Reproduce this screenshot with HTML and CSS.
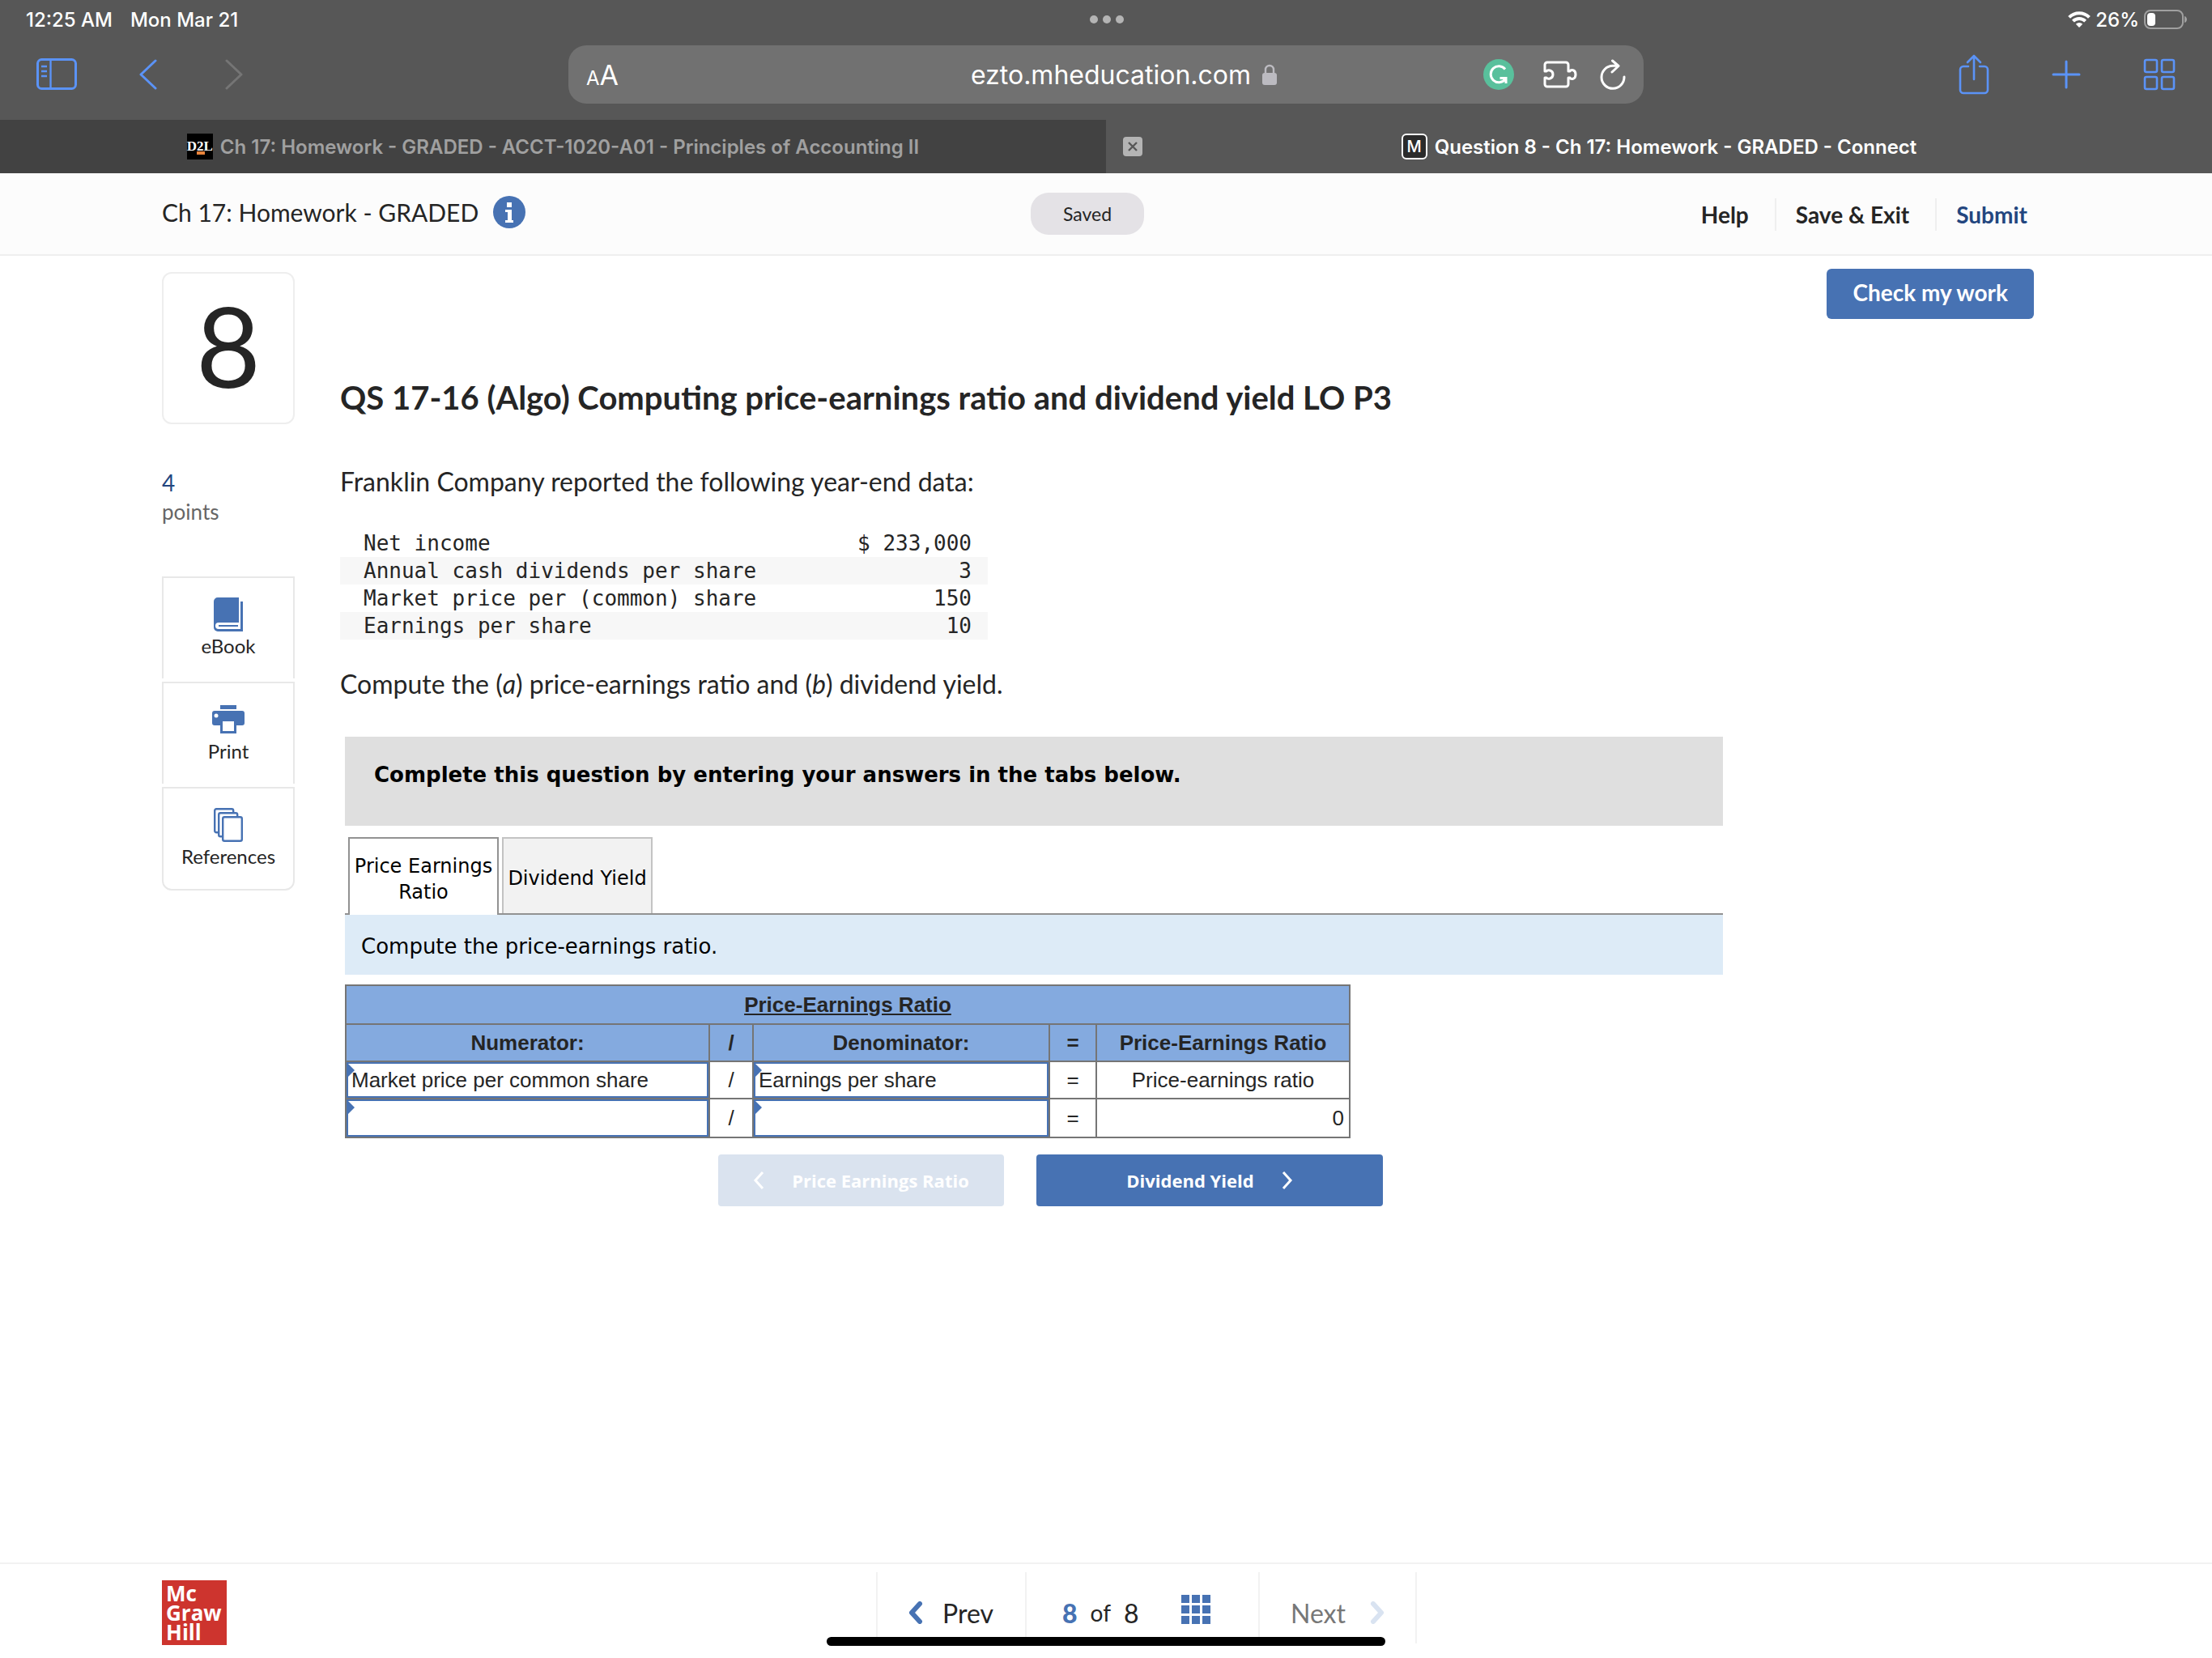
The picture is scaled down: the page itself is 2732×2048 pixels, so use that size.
FILE: index.html
```html
<!DOCTYPE html>
<html lang="en">
<head>
  <meta charset="UTF-8" />
  <meta name="viewport" content="width=device-width, initial-scale=1.0" />
  <title>Question 8 - Ch 17: Homework - GRADED - Connect</title>
  <link rel="stylesheet" href="styles.css">
</head>
<body>
  <header class="browser">
    <div class="status">
      <div class="status-left"><span>12:25 AM</span><span>Mon Mar 21</span></div>
      <div class="dots"><i></i><i></i><i></i></div>
      <div class="status-right">
        <svg width="28" height="20" viewBox="0 0 28 20" fill="none" stroke="#fff" stroke-width="4">
          <path d="M1.6 7.4a17.5 17.5 0 0 1 24.8 0M6.4 12.2a10.8 10.8 0 0 1 15.2 0" />
          <path d="M14 20l-4.2-4.3a6 6 0 0 1 8.4 0z" fill="#fff" stroke="none" />
        </svg>
        <span>26%</span>
        <svg width="54" height="24" viewBox="0 0 54 24">
          <rect x="1" y="1" width="47" height="22" rx="7" fill="none" stroke="#a0a0a0" stroke-width="2" />
          <rect x="4" y="4" width="10" height="16" rx="4" fill="#fff" />
          <path d="M50 8c4 1 4 7 0 8z" fill="#a0a0a0" />
        </svg>
      </div>
    </div>

    <div class="toolbar">
      <div class="tools-left">
        <button aria-label="Sidebar">
          <svg width="50" height="40" viewBox="0 0 50 40" fill="none" stroke="#5b93f7" stroke-width="3">
            <rect x="1.5" y="1.5" width="47" height="36" rx="5" />
            <path d="M17.5 2v35M6 10h7M6 16h7M6 22h7" stroke-width="2.4" />
          </svg>
        </button>
        <button aria-label="Back">
          <svg width="22" height="38" viewBox="0 0 22 38" fill="none" stroke="#5b93f7" stroke-width="3" stroke-linecap="round" stroke-linejoin="round"><path d="M20 2L2 19l18 17" /></svg>
        </button>
        <button aria-label="Forward" disabled>
          <svg width="22" height="38" viewBox="0 0 22 38" fill="none" stroke="#757575" stroke-width="3" stroke-linecap="round" stroke-linejoin="round"><path d="M2 2l18 17L2 36" /></svg>
        </button>
      </div>
      <div class="address">
        <button class="text-size" aria-label="Text size"><small>A</small>A</button>
        <div class="url">
          <span>ezto.mheducation.com</span>
          <svg width="18" height="26" viewBox="0 0 18 26">
            <path d="M4 12V7a5 5 0 0 1 10 0v5" fill="none" stroke="#bcbbc1" stroke-width="2.4" />
            <rect y="11" width="18" height="15" rx="3" fill="#bcbbc1" />
          </svg>
        </div>
        <div class="address-icons">
          <button class="grammar" aria-label="Grammarly">
            <svg width="38" height="38" viewBox="0 0 38 38" fill="none" stroke="#fff" stroke-width="3">
              <circle cx="19" cy="19" r="19" fill="#59c09c" stroke="none" />
              <path d="M27 12.5A10 10 0 1 0 27 25M20.5 23.5H28V30" />
            </svg>
          </button>
          <button aria-label="Extensions">
            <svg width="42" height="34" viewBox="0 0 42 34" fill="none" stroke="#fff" stroke-width="3" stroke-linejoin="round">
              <path d="M2 5a3 3 0 0 1 3-3h23a3 3 0 0 1 3 3v8h2c1-2 7-2.5 7 4s-6 6-7 4h-2v8a3 3 0 0 1-3 3H5a3 3 0 0 1-3-3v-8h2c1 2 8 2 8-4s-7-6-8-4H2z" />
            </svg>
          </button>
          <button aria-label="Reload">
            <svg width="32" height="38" viewBox="0 0 32 38" fill="none" stroke="#fff" stroke-width="3" stroke-linecap="round" stroke-linejoin="round">
              <path d="M22.5 8.3H16A14 14 0 1 0 30 22M15.5 2l7.5 6.5-8 7.500" />
            </svg>
          </button>
        </div>
      </div>
      <div class="tools-right">
        <button aria-label="Share">
          <svg width="38" height="50" viewBox="0 0 38 50" fill="none" stroke="#5b93f7" stroke-width="2.6" stroke-linecap="round" stroke-linejoin="round">
            <path d="M12 15H6a4 4 0 0 0-4 4v25a4 4 0 0 0 4 4h26a4 4 0 0 0 4-4V19a4 4 0 0 0-4-4h-6M19 31V2M11 10l8-8 8 8" />
          </svg>
        </button>
        <button aria-label="New tab">
          <svg width="36" height="36" viewBox="0 0 36 36" fill="none" stroke="#5b93f7" stroke-width="3" stroke-linecap="round"><path d="M18 2v32M2 18h32" /></svg>
        </button>
        <button aria-label="Tab overview">
          <svg width="40" height="40" viewBox="0 0 40 40" fill="none" stroke="#5b93f7" stroke-width="2.6">
            <rect x="2" y="2" width="15" height="15" rx="2" /><rect x="23" y="2" width="15" height="15" rx="2" />
            <rect x="2" y="23" width="15" height="15" rx="2" /><rect x="23" y="23" width="15" height="15" rx="2" />
          </svg>
        </button>
      </div>
    </div>

    <nav class="tabs">
      <a class="tab" href="#">
        <span class="fav fav-d2l">D2L</span>
        <span>Ch 17: Homework - GRADED - ACCT-1020-A01 - Principles of Accounting II</span>
      </a>
      <div class="tab active">
        <button class="tab-close" aria-label="Close tab">
          <svg width="24" height="24" viewBox="0 0 24 24"><rect width="24" height="24" rx="4" fill="#b4b4b4" /><path d="M7 7l10 10M17 7L7 17" stroke="#575757" stroke-width="2.4" /></svg>
        </button>
        <span class="fav fav-m">M</span>
        <span>Question 8 - Ch 17: Homework - GRADED - Connect</span>
      </div>
    </nav>
  </header>

  <header class="app-header">
    <div class="title">
      <span>Ch 17: Homework - GRADED</span>
      <button aria-label="Information">
        <svg width="40" height="40" viewBox="0 0 40 40"><circle cx="20" cy="20" r="20" fill="#4772b3" /><path d="M17 8h6v6h-6zM15 17h8v13h2v3H15v-3h3v-10h-3z" fill="#fff" /></svg>
      </button>
    </div>
    <span class="saved">Saved</span>
    <nav class="links">
      <a href="#">Help</a>
      <a href="#">Save &amp; Exit</a>
      <a href="#" class="submit">Submit</a>
    </nav>
  </header>

  <div class="page">
    <aside class="side">
      <div class="number">8</div>
      <div class="points"><b>4</b>points</div>
      <div class="side-tools">
        <button>
          <svg width="36" height="42" viewBox="0 0 36 42">
            <path d="M5 0h26v31H6a4 4 0 0 0 0 8h27V5h3v37H5a5 5 0 0 1-5-5V5a5 5 0 0 1 5-5z" fill="#4772b3" />
            <path d="M6 35h24" stroke="#4772b3" stroke-width="2" />
          </svg>
          <span>eBook</span>
        </button>
        <button>
          <svg width="40" height="42" viewBox="0 0 40 42" fill="#4772b3">
            <path d="M10 3h20v5H10zM3 10h34a3 3 0 0 1 3 3v12a3 3 0 0 1-3 3h-7v10H10V28H3a3 3 0 0 1-3-3V13a3 3 0 0 1 3-3z" />
            <path d="M13 23h14v12H13z" fill="#fff" /><circle cx="5" cy="16" r="2.5" fill="#fff" />
          </svg>
          <span>Print</span>
        </button>
        <button>
          <svg width="36" height="42" viewBox="0 0 36 42" fill="#fff" stroke="#4772b3" stroke-width="2.4">
            <rect x="1.2" y="1.2" width="23" height="29" rx="2" /><rect x="6.2" y="6.2" width="23" height="29" rx="2" /><rect x="11.2" y="11.2" width="23.6" height="29.6" rx="2" />
          </svg>
          <span>References</span>
        </button>
      </div>
    </aside>

    <main class="question">
      <button class="check">Check my work</button>
      <h1>QS 17-16 (Algo) Computing price-earnings ratio and dividend yield LO P3</h1>
      <p class="text">Franklin Company reported the following year-end data:</p>
      <table class="data">
        <tr><td>Net income</td><td>$ 233,000</td></tr>
        <tr><td>Annual cash dividends per share</td><td>3</td></tr>
        <tr><td>Market price per (common) share</td><td>150</td></tr>
        <tr><td>Earnings per share</td><td>10</td></tr>
      </table>
      <p class="text">Compute the (<i>a</i>) price-earnings ratio and (<i>b</i>) dividend yield.</p>

      <section class="worksheet">
        <div class="banner">Complete this question by entering your answers in the tabs below.</div>
        <div class="sheet-tabs">
          <button class="current">Price Earnings Ratio</button>
          <button>Dividend Yield</button>
        </div>
        <div class="instruction">Compute the price-earnings ratio.</div>
        <table class="answers">
          <colgroup><col class="numerator"><col class="slash"><col class="denominator"><col class="equals"><col></colgroup>
          <thead>
            <tr class="tall"><th colspan="5"><u>Price-Earnings Ratio</u></th></tr>
            <tr><th>Numerator:</th><th>/</th><th>Denominator:</th><th>=</th><th>Price-Earnings Ratio</th></tr>
          </thead>
          <tbody>
            <tr>
              <td class="entry"><input type="text" aria-label="Numerator name" value="Market price per common share"></td>
              <td>/</td>
              <td class="entry"><input type="text" aria-label="Denominator name" value="Earnings per share"></td>
              <td>=</td>
              <td>Price-earnings ratio</td>
            </tr>
            <tr class="tall">
              <td class="entry"><input type="text" aria-label="Numerator amount"></td>
              <td>/</td>
              <td class="entry"><input type="text" aria-label="Denominator amount"></td>
              <td>=</td>
              <td class="result">0</td>
            </tr>
          </tbody>
        </table>
        <div class="steps">
          <button class="step-prev" disabled>
            <svg width="14" height="22" viewBox="0 0 14 22" fill="none" stroke="#fff" stroke-width="3"><path d="M12 1L3 11l9 10" /></svg>
            <span>Price Earnings Ratio</span>
          </button>
          <button class="step-next">
            <span>Dividend Yield</span>
            <svg width="14" height="22" viewBox="0 0 14 22" fill="none" stroke="#fff" stroke-width="3"><path d="M2 1l9 10-9 10" /></svg>
          </button>
        </div>
      </section>
    </main>
  </div>

  <footer class="footer">
    <div class="logo">Mc<br>Graw<br>Hill</div>
    <nav class="pager">
      <button class="prev">
        <svg width="18" height="28" viewBox="0 0 18 28" fill="none" stroke="#4772b3" stroke-width="6" stroke-linecap="round" stroke-linejoin="round"><path d="M14 3L4 14l10 11" /></svg>
        <span>Prev</span>
      </button>
      <div class="count">
        <b>8</b><span class="of">of</span><span>8</span>
        <button aria-label="All questions">
          <svg width="36" height="36" viewBox="0 0 36 36" fill="#4772b3"><path d="M0 0h10v10H0zM13 0h10v10H13zM26 0h10v10H26zM0 13h10v10H0zM13 13h10v10H13zM26 13h10v10H26zM0 26h10v10H0zM13 26h10v10H13zM26 26h10v10H26z" /></svg>
        </button>
      </div>
      <button class="next" disabled>
        <span>Next</span>
        <svg width="18" height="28" viewBox="0 0 18 28" fill="none" stroke="#d9e3f1" stroke-width="6" stroke-linecap="round" stroke-linejoin="round"><path d="M4 3l10 11L4 25" /></svg>
      </button>
    </nav>
    <div class="home-bar"></div>
  </footer>
</body>
</html>
```
FILE: styles.css
```css
* {
  box-sizing: border-box;
}
body {
  margin: 0;
  min-height: 100vh;
  display: flex;
  flex-direction: column;
  background: #fff;
  color: #252525;
  font-family: Lato, sans-serif;
  font-size: 32px;
}
button {
  margin: 0;
  padding: 0;
  border: none;
  background: none;
  color: inherit;
  font: inherit;
  cursor: pointer;
}
button:disabled {
  cursor: default;
}
svg {
  display: block;
  flex: none;
}
a {
  color: inherit;
  text-decoration: none;
}

/* browser chrome */
.browser {
  background: #575757;
  color: #fff;
  font-family: Inter, sans-serif;
}
.status {
  display: grid;
  grid-template-columns: 1fr auto 1fr;
  align-items: center;
  height: 48px;
  padding: 0 30px 0 32px;
  font-size: 24px;
  font-weight: 500;
}
.status-left {
  display: flex;
  gap: 22px;
}
.status-right {
  display: flex;
  justify-content: flex-end;
  align-items: center;
  gap: 6px;
}
.dots {
  display: flex;
  gap: 6px;
}
.dots i {
  width: 10px;
  height: 10px;
  border-radius: 50%;
  background: #b4b4b4;
}
.toolbar {
  display: grid;
  grid-template-columns: 1fr 1328px 1fr;
  align-items: center;
  height: 100px;
  padding: 0 45px 12px;
}
.tools-left, .tools-right {
  display: flex;
  align-items: center;
  gap: 77px;
}
.tools-left button:last-child {
  margin-left: 7px;
}
.tools-right {
  justify-content: flex-end;
}
.address {
  display: grid;
  grid-template-columns: 1fr auto 1fr;
  align-items: center;
  height: 72px;
  padding: 0 22px;
  border-radius: 22px;
  background: #717171;
}
.text-size {
  justify-self: start;
  font-size: 34px;
}
.text-size small {
  font-size: 24px;
}
.url {
  display: flex;
  align-items: center;
  gap: 14px;
  padding-left: 44px;
  font-size: 32px;
}
.address-icons {
  display: flex;
  align-items: center;
  justify-content: flex-end;
  gap: 28px;
}
.grammar {
  margin-right: 8px;
}
.tabs {
  display: grid;
  grid-template-columns: 1fr 1fr;
  height: 66px;
  font-size: 24px;
  font-weight: 600;
}
.tab {
  position: relative;
  display: flex;
  align-items: center;
  justify-content: center;
  gap: 9px;
  background: #424242;
  color: #a0a0a0;
}
.tab.active {
  background: #575757;
  color: #fff;
}
.tab-close {
  position: absolute;
  left: 21px;
}
.fav {
  display: flex;
  align-items: center;
  justify-content: center;
  width: 32px;
  height: 32px;
}
.fav-d2l {
  background: linear-gradient(#e8843c, #e8843c) 12px 22px / 10px 4px no-repeat #000;
  color: #fff;
  font: bold 17px "Liberation Serif", serif;
}
.fav-m {
  border: 2px solid #fff;
  border-radius: 6px;
  background: #2b2b2b;
  color: #fff;
  font-size: 20px;
  font-weight: 500;
}

/* assignment header */
.app-header {
  display: grid;
  grid-template-columns: 1fr auto 1fr;
  align-items: center;
  height: 102px;
  padding: 0 228px 4px 200px;
  border-bottom: 2px solid #efefef;
  background: #fcfcfc;
}
.title {
  display: flex;
  align-items: center;
  gap: 18px;
  font-size: 30px;
}
.saved {
  min-width: 140px;
  margin: 4px 18px 0 0;
  border-radius: 22px;
  background: #e4e2e6;
  font-size: 23px;
  line-height: 52px;
  text-align: center;
}
.links {
  display: flex;
  justify-content: flex-end;
  margin-top: 6px;
  font-size: 28px;
  font-weight: bold;
  line-height: 40px;
}
.links a + a {
  margin-left: 32px;
  padding-left: 24px;
  border-left: 2px solid #efefef;
}
.links .submit {
  color: #23467f;
}

.page {
  flex: 1;
  display: flex;
  align-items: flex-start;
  gap: 56px;
  padding: 16px 220px 0 200px;
}
.side {
  width: 164px;
  padding-top: 4px;
}
.number {
  height: 188px;
  border: 2px solid #eee;
  border-radius: 12px;
  font-size: 138px;
  line-height: 176px;
  text-align: center;
}
.points {
  margin-top: 54px;
  color: #666;
  font-size: 26px;
  line-height: 36px;
}
.points b {
  display: block;
  color: #23467f;
  font-size: 28px;
  font-weight: normal;
}
.side-tools {
  display: flex;
  flex-direction: column;
  gap: 4px;
  margin-top: 62px;
}
.side-tools button {
  display: flex;
  flex-direction: column;
  align-items: center;
  gap: 2px;
  height: 126px;
  padding-top: 24px;
  border: 2px solid #e8e8e8;
  border-bottom: none;
  font-size: 24px;
  line-height: 32px;
}
.side-tools button:last-child {
  height: 128px;
  border-bottom: 2px solid #e8e8e8;
  border-radius: 0 0 12px 12px;
}

.question {
  flex: 1;
  display: flex;
  flex-direction: column;
  align-items: flex-start;
}
.check {
  align-self: flex-end;
  height: 62px;
  padding: 0 32px 4px;
  border-radius: 6px;
  background: #4772b3;
  color: #fff;
  font-size: 28px;
  font-weight: bold;
}
h1 {
  margin: 72px 0 0;
  font-size: 40px;
  line-height: 50px;
}
.text {
  margin: 58px 0 0;
  line-height: 42px;
}
.data {
  width: 800px;
  margin-top: 38px;
  border-collapse: collapse;
  font-family: "DejaVu Sans Mono", monospace;
  font-size: 26px;
  line-height: 34px;
}
.data td {
  padding: 0 20px 0 29px;
}
.data td:last-child {
  text-align: right;
}
.data tr:nth-child(even) {
  background: #f7f7f7;
}
.data + .text {
  margin-top: 34px;
}

/* tabbed worksheet */
.worksheet {
  align-self: stretch;
  margin: 44px 384px 0 6px;
  color: #000;
  font-family: "DejaVu Sans", sans-serif;
  font-size: 26px;
}
.banner {
  height: 110px;
  padding: 31px 36px;
  background: #dfdfdf;
  font-weight: bold;
  line-height: 32px;
}
.sheet-tabs {
  display: flex;
  gap: 4px;
  margin-top: 14px;
  padding-left: 4px;
  border-bottom: 2px solid #929292;
}
.sheet-tabs button {
  width: 186px;
  height: 94px;
  padding-top: 6px;
  border: 2px solid #c3c3c3;
  border-bottom: none;
  background: #f2f2f2;
  font-size: 24px;
  line-height: 32px;
}
.sheet-tabs .current {
  height: 96px;
  margin-bottom: -2px;
  border-color: #929292;
  background: #fff;
}
.instruction {
  padding: 22px 20px 18px;
  background: #ddebf7;
  line-height: 34px;
}
.answers {
  width: 1242px;
  margin-top: 12px;
  border-collapse: collapse;
  table-layout: fixed;
  color: #252525;
  font-family: "Liberation Sans", Arial, sans-serif;
  font-size: 26px;
  line-height: 30px;
}
.numerator {
  width: 449px;
}
.slash {
  width: 54px;
}
.denominator {
  width: 366px;
}
.equals {
  width: 58px;
}
.answers th, .answers td {
  height: 46px;
  padding: 0 6px;
  border: 2px solid #757575;
  text-align: center;
}
.answers .tall th, .answers .tall td {
  height: 48px;
}
.answers th {
  background: #84aadf;
}
.answers .result {
  text-align: right;
}
.answers .entry {
  position: relative;
  padding: 0;
}
.entry::before {
  content: "";
  position: absolute;
  left: 1px;
  top: 1px;
  border: 9px solid transparent;
  border-left-color: #4772b3;
  border-right: none;
}
.entry input {
  display: block;
  width: 100%;
  height: 44px;
  padding: 0 4px;
  border: 2px solid #4772b3;
  background: #fff;
  color: inherit;
  font: inherit;
}
.answers .tall input {
  height: 46px;
}
.steps {
  display: flex;
  gap: 40px;
  margin: 20px 0 0 461px;
  color: #fff;
  font-family: "Open Sans", sans-serif;
  font-size: 22px;
  font-weight: bold;
}
.steps button {
  display: flex;
  align-items: center;
  justify-content: center;
  gap: 34px;
  height: 64px;
  border-radius: 4px;
  background: #4772b3;
}
.steps .step-prev {
  width: 353px;
  background: #dae3ef;
}
.steps .step-next {
  width: 428px;
}

.footer {
  position: relative;
  display: grid;
  grid-template-columns: 1fr auto 1fr;
  height: 118px;
  padding: 10px 200px;
  border-top: 2px solid #f2f2f2;
}
.logo {
  width: 80px;
  height: 80px;
  margin-top: 10px;
  padding: 4px 5px;
  background: #cd342e;
  color: #fff;
  font: bold 26px/24px "Open Sans", sans-serif;
}
.pager {
  display: flex;
  align-items: center;
  height: 88px;
  margin-left: 100px;
  border-right: 2px solid #f2f2f2;
}
.pager > * {
  display: flex;
  align-items: center;
  height: 88px;
  padding-top: 12px;
  border-left: 2px solid #f2f2f2;
}
.prev {
  gap: 24px;
  width: 184px;
  padding-left: 38px;
}
.count {
  gap: 16px;
  width: 288px;
  padding-left: 44px;
}
.count b {
  color: #4772b3;
  font-weight: 900;
}
.count .of {
  font-size: 28px;
}
.count button {
  margin: 0 0 8px 36px;
}
.next {
  justify-content: space-between;
  width: 194px;
  padding-right: 38px;
  padding-left: 38px;
  color: #777;
}
.home-bar {
  position: absolute;
  bottom: 15px;
  left: 50%;
  width: 690px;
  height: 11px;
  margin-left: -345px;
  border-radius: 6px;
  background: #000;
}
```
